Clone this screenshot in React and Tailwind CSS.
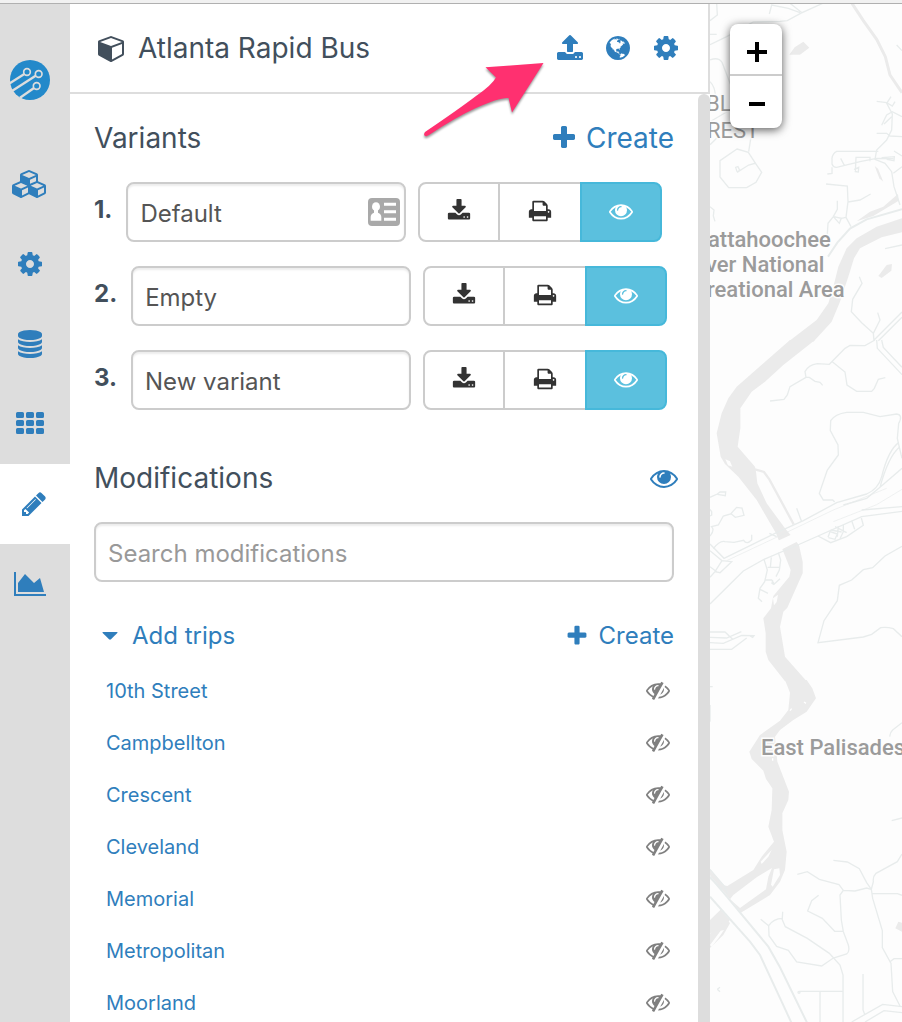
import React from "react";

const ICONS = {
  upload: {
    w: 1792,
    d: "M1344 1472q0-26-19-45t-45-19-45 19-19 45 19 45 45 19 45-19 19-45zm256 0q0-26-19-45t-45-19-45 19-19 45 19 45 45 19 45-19 19-45zm128-224v320q0 40-28 68t-68 28h-1472q-40 0-68-28t-28-68v-320q0-40 28-68t68-28h427q21 56 70.5 92t110.5 36h256q61 0 110.5-36t70.5-92h427q40 0 68 28t28 68zm-325-648q-17 40-59 40h-256v448q0 26-19 45t-45 19h-256q-26 0-45-19t-19-45v-448h-256q-42 0-59-40-17-39 14-69l448-448q18-19 45-19t45 19l448 448q31 30 14 69z",
  },
  download: {
    w: 1792,
    d: "M1344 1344q0-26-19-45t-45-19-45 19-19 45 19 45 45 19 45-19 19-45zm256 0q0-26-19-45t-45-19-45 19-19 45 19 45 45 19 45-19 19-45zm128-224v320q0 40-28 68t-68 28h-1472q-40 0-68-28t-28-68v-320q0-40 28-68t68-28h465l135 136q58 56 136 56t136-56l136-136h464q40 0 68 28t28 68zm-325-569q17 41-14 70l-448 448q-18 19-45 19t-45-19l-448-448q-31-29-14-70 17-39 59-39h256v-448q0-26 19-45t45-19h256q26 0 45 19t19 45v448h256q42 0 59 39z",
  },
  cog: {
    w: 1792,
    d: "M1152 896q0-106-75-181t-181-75-181 75-75 181 75 181 181 75 181-75 75-181zm512-109v222q0 12-8 23t-20 13l-185 28q-19 54-39 91 35 50 107 138 10 12 10 25t-9 23q-27 37-99 108t-94 71q-12 0-26-9l-138-108q-44 23-91 38-16 136-29 186-7 28-36 28h-222q-14 0-24.5-8.5t-11.5-21.5l-28-184q-49-16-90-37l-141 107q-10 9-25 9-14 0-25-11-126-114-165-168-7-10-7-23 0-12 8-23 15-21 51-66.5t54-70.5q-27-50-41-99l-183-27q-13-2-21-12.5t-8-23.5v-222q0-12 8-23t19-13l186-28q14-46 39-92-40-57-107-138-10-12-10-24 0-10 9-23 26-36 98.5-107.5t94.5-71.5q13 0 26 10l138 107q44-23 91-38 16-136 29-186 7-28 36-28h222q14 0 24.5 8.5t11.5 21.5l28 184q49 16 90 37l142-107q9-9 24-9 13 0 25 10 129 119 165 170 7 8 7 22 0 12-8 23-15 21-51 66.5t-54 70.5q26 50 41 98l183 28q13 2 21 12.5t8 23.5z",
  },
  database: {
    w: 1792,
    d: "M896 768q237 0 443-43t325-127v170q0 69-103 128t-280 93.5-385 34.5-385-34.5-280-93.5-103-128v-170q119 84 325 127t443 43zm0 768q237 0 443-43t325-127v170q0 69-103 128t-280 93.5-385 34.5-385-34.5-280-93.5-103-128v-170q119 84 325 127t443 43zm0-384q237 0 443-43t325-127v170q0 69-103 128t-280 93.5-385 34.5-385-34.5-280-93.5-103-128v-170q119 84 325 127t443 43zm0-1152q208 0 385 34.5t280 93.5 103 128v128q0 69-103 128t-280 93.5-385 34.5-385-34.5-280-93.5-103-128v-128q0-69 103-128t280-93.5 385-34.5z",
  },
  th: {
    w: 1792,
    d: "M96 128h320q96 0 96 96v192q0 96-96 96h-320q-96 0-96-96v-192q0-96 96-96zm640 0h320q96 0 96 96v192q0 96-96 96h-320q-96 0-96-96v-192q0-96 96-96zm640 0h320q96 0 96 96v192q0 96-96 96h-320q-96 0-96-96v-192q0-96 96-96zM96 640h320q96 0 96 96v192q0 96-96 96h-320q-96 0-96-96v-192q0-96 96-96zm640 0h320q96 0 96 96v192q0 96-96 96h-320q-96 0-96-96v-192q0-96 96-96zm640 0h320q96 0 96 96v192q0 96-96 96h-320q-96 0-96-96v-192q0-96 96-96zM96 1152h320q96 0 96 96v192q0 96-96 96h-320q-96 0-96-96v-192q0-96 96-96zm640 0h320q96 0 96 96v192q0 96-96 96h-320q-96 0-96-96v-192q0-96 96-96zm640 0h320q96 0 96 96v192q0 96-96 96h-320q-96 0-96-96v-192q0-96 96-96z",
  },
  pencil: {
    w: 1792,
    d: "M491 1536l91-91-235-235-91 91v107h128v128h107zm523-928q0-22-22-22-10 0-17 7l-542 542q-7 7-7 17 0 22 22 22 10 0 17-7l542-542q7-7 7-17zm-54-192l416 416-832 832h-416v-416zm683 96q0 53-37 90l-166 166-416-416 166-165q36-38 90-38 53 0 91 38l235 234q37 39 37 91z",
  },
  chart: {
    w: 2048,
    d: "M2048 1536v128h-2048v-1536h128v1408h1920zm-384-1024l256 896h-1664v-576l448-576 576 576z",
  },
  plus: {
    w: 1792,
    d: "M1600 736v192q0 40-28 68t-68 28h-416v416q0 40-28 68t-68 28h-192q-40 0-68-28t-28-68v-416h-416q-40 0-68-28t-28-68v-192q0-40 28-68t68-28h416v-416q0-40 28-68t68-28h192q40 0 68 28t28 68v416h416q40 0 68 28t28 68z",
  },
  eye: {
    w: 1792,
    d: "M1664 960q-152-236-381-353 61 104 61 225 0 185-131.5 316.5t-316.5 131.5-316.5-131.5-131.5-316.5q0-121 61-225-229 117-381 353 133 205 333.5 326.5t434.5 121.5 434.5-121.5 333.5-326.5zm-720-384q0-20-14-34t-34-14q-125 0-214.5 89.5t-89.5 214.5q0 20 14 34t34 14 34-14 14-34q0-86 61-147t147-61q20 0 34-14t14-34zm848 384q0 34-20 69-140 230-376.5 368.5t-499.5 138.5-499.5-139-376.5-368q-20-35-20-69t20-69q140-229 376.5-368t499.5-139 499.5 139 376.5 368q20 35 20 69z",
  },
  eyeSlash: {
    w: 1792,
    d: "M555 1335l78-141q-87-63-136-159t-49-203q0-121 61-225-229 117-381 353 167 258 427 375zm389-759q0-20-14-34t-34-14q-125 0-214.5 89.5t-89.5 214.5q0 20 14 34t34 14 34-14 14-34q0-86 61-147t147-61q20 0 34-14t14-34zm363-191q0 7-1 9-105 188-315 566t-316 567l-49 89q-10 16-28 16-12 0-134-70-16-10-16-28 0-12 44-87-143-65-263.5-173t-208.5-245q-20-31-20-69t20-69q153-235 380-371t496-136q89 0 180 17l54-97q10-16 28-16 5 0 18 6t31 15.5 33 18.5 31.5 18.5 19.5 11.5q16 10 16 27zm37 447q0 139-79 253.5t-209 164.5l280-502q8 45 8 84zm448 128q0 35-20 69-39 64-109 145-150 172-347.5 267t-419.5 95l74-132q212-18 392.5-137t301.5-307q-115-179-282-294l63-112q95 64 182.5 153t144.5 184q20 34 20 69z",
  },
  print: {
    w: 1792,
    d: "M448 1536h896v-256h-896v256zm0-640h896v-384h-160q-40 0-68-28t-28-68v-160h-640v640zm1152 64q0-26-19-45t-45-19-45 19-19 45 19 45 45 19 45-19 19-45zm128 0v416q0 13-9.5 22.5t-22.5 9.5h-224v160q0 40-28 68t-68 28h-960q-40 0-68-28t-28-68v-160h-224q-13 0-22.5-9.5t-9.5-22.5v-416q0-79 56.5-135.5t135.5-56.5h64v-544q0-40 28-68t68-28h672q40 0 88 20t76 48l152 152q28 28 48 76t20 88v256h64q79 0 135.5 56.5t56.5 135.5z",
  },
  cube: {
    w: 1792,
    d: "M896 1629l640-349v-636l-640 233v752zm-64-865l698-254-698-254-698 254zm832-252v768q0 35-18 65t-49 47l-704 384q-28 16-61 16t-61-16l-704-384q-31-17-49-47t-18-65v-768q0-40 23-73t61-47l704-256q22-8 44-8t44 8l704 256q38 14 61 47t23 73z",
  },
  cubes: {
    w: 2304,
    d: "M640 1632l384-192v-314l-384 164v342zm-64-454l404-173-404-173-404 173zm1088 454l384-192v-314l-384 164v342zm-64-454l404-173-404-173-404 173zm-448-293l384-165v-266l-384 164v267zm-64-379l441-189-441-189-441 189zm1088 518v416q0 36-19 67t-52 47l-448 224q-25 14-57 14t-57-14l-448-224q-4-2-7-4-2 2-7 4l-448 224q-25 14-57 14t-57-14l-448-224q-33-16-52-47t-19-67v-416q0-38 21.5-70t56.5-48l434-186v-400q0-38 21.5-70t56.5-48l448-192q23-10 50-10t50 10l448 192q35 16 56.5 48t21.5 70v400l434 186q36 16 57 48t21 70z",
  },
  globe: {
    w: 1792,
    d: "M896 128q209 0 385.5 103t279.5 279.5 103 385.5-103 385.5-279.5 279.5-385.5 103-385.5-103-279.5-279.5-103-385.5 103-385.5 279.5-279.5 385.5-103zm274 521q-2 1-9.5 9.5t-13.5 9.5q2 0 4.5-5t5-11 3.5-7q6-7 22-15 14-6 52-12 34-8 51 11-2-2 9.5-13t14.5-12q3-2 15-4.5t15-7.5l2-22q-12 1-17.5-7t-6.5-21q0 2-6 8 0-7-4.5-8t-11.5 1-9 1q-10-3-15-7.5t-8-16.5-4-15q-2-5-9.5-11t-9.5-10q-1-2-2.5-5.5t-3-6.5-4-5.5-5.5-2.5-7 5-7.5 10-4.5 5q-3-2-6-1.5t-4.5 1-4.5 3-5 3.5q-3 2-8.5 3t-8.5 2q15-5-1-11-10-4-16-3 9-4 7.5-12t-8.5-14h5q-1-4-8.5-8.5t-17.5-8.5-13-6q-8-5-34-9.5t-33-.5q-5 6-4.5 10.5t4 14 3.5 12.5q1 6-5.5 13t-6.5 12q0 7 14 15.5t10 21.5q-3 8-16 16t-16 12q-5 8-1.5 18.5t10.5 16.5q2 2 1.5 4t-3.5 4.5-5.5 4-6.5 3.5l-3 2q-11 5-20.5-6t-13.5-26q-7-25-16-30-23-8-29 1-5-13-41-26-25-9-58-4 6-1 0-15-7-15-19-12 3-6 4-17.5t1-13.5q3-13 12-23 1-1 7-8.5t9.5-13.5.5-6q35 4 50-11 5-5 11.5-17t10.5-17q9-6 14-5.5t14.5 5.5 14.5 5q14 1 15.5-11t-7.5-20q12 1 3-17-4-7-8-9-12-4-27 5-8 4 2 8-1-1-9.5 10.5t-16.5 17.5-16-5q-1-1-5.5-13.5t-9.5-13.5q-8 0-16 15 3-8-11-15t-24-8q19-12-8-27-7-4-20.5-5t-19.5 4q-5 7-5.5 11.5t5 8 10.5 5.5 11.5 4 8.5 3q14 10 8 14-2 1-8.5 3.5t-11.5 4.5-6 4q-3 4 0 14t-2 14q-5-5-9-17.5t-7-16.5q7 9-25 6l-10-1q-4 0-16 2t-20.5 1-13.5-8q-4-8 0-20 1-4 4-2-4-3-11-9.5t-10-8.5q-46 15-94 41 6 1 12-1 5-2 13-6.5t10-5.5q34-14 42-7l5-5q14 16 20 25-7-4-30-1-20 6-22 12 7 12 5 18-4-3-11.5-10t-14.5-11-15-5q-16 0-22 1-146 80-235 222 7 7 12 8 4 1 5 9t2.5 11 11.5-3q9 8 3 19 1-1 44 27 19 17 21 21 3 11-10 18-1-2-9-9t-9-4q-3 5 .5 18.5t10.5 12.5q-7 0-9.5 16t-2.5 35.5-1 23.5l2 1q-3 12 5.5 34.5t21.5 19.5q-13 3 20 43 6 8 8 9 3 2 12 7.5t15 10 10 10.5q4 5 10 22.5t14 23.5q-2 6 9.5 20t10.5 23q-1 0-2.5 1t-2.5 1q3 7 15.5 14t15.5 13q1 3 2 10t3 11 8 2q2-20-24-62-15-25-17-29-3-5-5.5-15.5t-4.5-14.5q2 0 6 1.5t8.5 3.5 7.5 4 2 3q-3 7 2 17.5t12 18.5 17 19 12 13q6 6 14 19.5t0 13.5q9 0 20 10.5t17 19.5q5 8 8 26t5 24q2 7 8.5 13.5t12.5 9.5l16 8 13 7q5 2 18.5 10.5t21.5 11.5q10 4 16 4t14.5-2.5 13.5-3.5q15-2 29 15t21 21q36 19 55 11-2 1 .5 7.5t8 15.5 9 14.5 5.5 8.5q5 6 18 15t18 15q6-4 7-9-3 8 7 20t18 10q14-3 14-32-31 15-49-18 0-1-2.5-5.5t-4-8.5-2.5-8.5 0-7.5 5-3q9 0 10-3.5t-2-12.5-4-13q-1-8-11-20t-12-15q-5 9-16 8t-16-9q0 1-1.5 5.5t-1.5 6.5q-13 0-15-1 1-3 2.5-17.5t3.5-22.5q1-4 5.5-12t7.5-14.5 4-12.5-4.5-9.5-17.5-2.5q-19 1-26 20-1 3-3 10.5t-5 11.5-9 7q-7 3-24 2t-24-5q-13-8-22.5-29t-9.5-37q0-10 2.5-26.5t3-25-5.5-24.5q3-2 9-9.5t10-10.5q2-1 4.5-1.5t4.5 0 4-1.5 3-6q-1-1-4-3-3-3-4-3 7 3 28.5-1.5t27.5 1.5q15 11 22-2 0-1-2.5-9.5t-.5-13.5q5 27 29 9 3 3 15.5 5t17.5 5q3 2 7 5.5t5.5 4.5 5-.5 8.5-6.5q10 14 12 24 11 40 19 44 7 3 11 2t4.5-9.5 0-14-1.5-12.5l-1-8v-18l-1-8q-15-3-18.5-12t1.5-18.5 15-18.5q1-1 8-3.5t15.5-6.5 12.5-8q21-19 15-35 7 0 11-9-1 0-5-3t-7.5-5-4.5-2q9-5 2-16 5-3 7.5-11t7.5-10q9 12 21 2 7-8 1-16 5-7 20.5-10.5t18.5-9.5q7 2 8-2t1-12 3-12q4-5 15-9t13-5l17-11q3-4 0-4 18 2 31-11 10-11-6-20 3-6-3-9.5t-15-5.5q3-1 11.5-.5t10.5-1.5q15-10-7-16-17-5-43 12zm-163 877q206-36 351-189-3-3-12.5-4.5t-12.5-3.5q-18-7-24-8 1-7-2.5-13t-8-9-12.5-8-11-7q-2-2-7-6t-7-5.5-7.5-4.5-8.5-2-10 1l-3 1q-3 1-5.5 2.5t-5.5 3-4 3 0 2.5q-21-17-36-22-5-1-11-5.5t-10.5-7-10-1.5-11.5 7q-5 5-6 15t-2 13q-7-5 0-17.5t2-18.5q-3-6-10.5-4.5t-12 4.5-11.5 8.5-9 6.5-8.5 5.5-8.5 7.5q-3 4-6 12t-5 11q-2-4-11.5-6.5t-9.5-5.5q2 10 4 35t5 38q7 31-12 48-27 25-29 40-4 22 12 26 0 7-8 20.5t-7 21.5q0 6 2 16z",
  },
};

function Icon({ name, className = "h-7" }) {
  const icon = ICONS[name];
  return (
    <svg viewBox={`0 0 ${icon.w} 1792`} fill="currentColor" aria-hidden="true" className={`block shrink-0 ${className}`}>
      <path d={icon.d} />
    </svg>
  );
}

function Logo() {
  return (
    <svg viewBox="0 0 120 120" className="block size-10" aria-hidden="true">
      <circle cx="60" cy="60" r="60" fill="#2389ca" />
      <g fill="none" stroke="#ddd" strokeWidth="7">
        <path d="M-2 71L43 42" />
        <path d="M6 93L77 47" />
        <path d="M30 113L72 84" />
        <g strokeWidth="5">
          <circle cx="51" cy="36" r="10" />
          <circle cx="86" cy="42" r="10" />
          <circle cx="80" cy="78" r="10" />
        </g>
      </g>
    </svg>
  );
}

const NAV = [
  { icon: "cubes", label: "Projects" },
  { icon: "cog", label: "Region settings" },
  { icon: "database", label: "GTFS bundles" },
  { icon: "th", label: "Opportunity datasets" },
  { icon: "pencil", label: "Edit modifications", active: true },
  { icon: "chart", label: "Analyze" },
];

function Sidebar() {
  return (
    <nav className="flex w-[70px] shrink-0 flex-col bg-[#ddd] pt-14 text-[#2f7ebc]">
      <a href="#home" aria-label="Home" className="mb-11 ml-[10px] self-start">
        <Logo />
      </a>
      {NAV.map((item) => (
        <a
          key={item.icon}
          href={`#${item.icon}`}
          aria-label={item.label}
          className={
            item.active
              ? "flex h-20 items-center justify-center bg-white pr-[2px]"
              : "flex h-20 items-center justify-center pr-[10px]"
          }
        >
          <Icon name={item.icon} />
        </a>
      ))}
    </nav>
  );
}

function Header() {
  return (
    <header className="flex h-[90px] shrink-0 items-center justify-between border-r-2 border-b-2 border-[#ddd] pr-7 pl-7">
      <h1 className="flex items-center gap-3 text-[28px] leading-8 text-[#424f5c]">
        <Icon name="cube" />
        Atlanta Rapid Bus
      </h1>
      <div className="flex gap-5 text-[#2f7ebc]">
        <button aria-label="Upload"><Icon name="upload" /></button>
        <button aria-label="Open map"><Icon name="globe" /></button>
        <button aria-label="Settings"><Icon name="cog" /></button>
      </div>
    </header>
  );
}

function ContactCard() {
  return (
    <svg viewBox="0 0 96 84" className="absolute top-4 right-[6px] h-7 w-8" aria-hidden="true">
      <rect width="96" height="84" rx="12" fill="#a9a9a9" />
      <g fill="#fff">
        <ellipse cx="24" cy="26" rx="12" ry="13" />
        <path d="M18 34h12v10q10 3 10 14v10H8V58q0-11 10-14z" />
        <path d="M48 14h36v9H48zM48 37h36v9H48zM48 59h36v9H48z" />
      </g>
    </svg>
  );
}

function Variant({ index, name, card }) {
  return (
    <li className="flex">
      <label htmlFor={`variant-${index}`} className="mr-[14px] pt-3 text-2xl leading-8 font-bold text-[#424f5c]">
        {index}.
      </label>
      <div className="relative mr-3 w-[280px]">
        <input
          id={`variant-${index}`}
          type="text"
          defaultValue={name}
          className="h-[60px] w-full rounded-lg border-2 border-[#ccc] bg-white px-3 pt-[2px] text-2xl text-[#555] shadow-[inset_0_2px_2px_rgba(0,0,0,0.075)]"
        />
        {card && <ContactCard />}
      </div>
      <div className="flex h-[60px] text-[#333]">
        <button aria-label="Download" className="flex w-[82px] items-center justify-center rounded-l-lg border-2 border-[#ccc] pb-[2px]">
          <Icon name="download" className="h-6" />
        </button>
        <button aria-label="Print" className="flex w-20 items-center justify-center border-y-2 border-[#ccc] pb-[2px]">
          <Icon name="print" className="h-6" />
        </button>
        <button aria-label="Show variant" className="flex w-[82px] items-center justify-center rounded-r-lg border-2 border-[#46b8da] bg-[#5bc0de] pb-[2px] text-white">
          <Icon name="eye" className="h-6" />
        </button>
      </div>
    </li>
  );
}

const TRIPS = ["10th Street", "Campbellton", "Crescent", "Cleveland", "Memorial", "Metropolitan", "Moorland"];

function Panel() {
  return (
    <main className="flex w-[640px] shrink-0 flex-col bg-white">
      <Header />
      <div className="flex min-h-0 flex-1">
        <div className="min-w-0 flex-1 overflow-hidden px-6 pt-7">
          <div className="flex items-center justify-between text-[28px] leading-8">
            <h2 className="text-[#424f5c]">Variants</h2>
            <button className="flex items-center gap-2 text-[#2f7ebc]">
              <Icon name="plus" />
              Create
            </button>
          </div>
          <ol className="mt-7 flex flex-col gap-6">
            <Variant index={1} name="Default" card />
            <Variant index={2} name="Empty" />
            <Variant index={3} name="New variant" />
          </ol>

          <div className="mt-[52px] flex items-center justify-between">
            <h2 className="text-[28px] leading-8 text-[#424f5c]">Modifications</h2>
            <button aria-label="Show all modifications" className="-mr-1 text-[#2f7ebc]">
              <Icon name="eye" />
            </button>
          </div>
          <input
            type="search"
            aria-label="Search modifications"
            placeholder="Search modifications"
            className="mt-7 block h-[60px] w-full rounded-lg border-2 border-[#ccc] px-3 pt-[2px] text-2xl text-[#555] shadow-[inset_0_2px_2px_rgba(0,0,0,0.075)] placeholder:text-[#999]"
          />

          <div className="mt-[38px] flex items-center justify-between text-2xl text-[#2f7ebc]">
            <button className="flex items-center gap-[14px] pl-2">
              <svg viewBox="0 0 16 8" className="block h-2 w-4" fill="currentColor" aria-hidden="true">
                <path d="M1 0h14q1 0 .3 1L9 7.300q-1 .8-2 0L.7 1Q0 0 1 0z" />
              </svg>
              Add trips
            </button>
            <button className="flex items-center gap-[10px]">
              <Icon name="plus" className="h-6" />
              Create
            </button>
          </div>
          <ul className="mt-[13px]">
            {TRIPS.map((trip) => (
              <li key={trip} className="flex h-[52px] items-center justify-between pr-1 pl-3 text-xl">
                <a href={`#${trip}`} className="text-[#2f7ebc]">{trip}</a>
                <button aria-label={`Show ${trip}`} className="pb-[2px] text-[#808080]">
                  <Icon name="eyeSlash" className="h-6" />
                </button>
              </li>
            ))}
          </ul>
        </div>
        <div className="w-3 shrink-0 rounded-t-md bg-[#ddd]" />
      </div>
    </main>
  );
}

function MapDrawing() {
  return (
    <svg viewBox="0 0 192 1018" preserveAspectRatio="xMinYMin slice" className="absolute inset-0 h-full w-full" aria-hidden="true">
      <g transform="translate(-10 -4) scale(0.33333)" fill="none" stroke="#e8ecec" strokeWidth="4">
        <path d="M606 655L530 680 470 715 440 745 415 800 400 860 385 910 350 960 265 1025H340L395 965 420 905 445 830 462 775 480 745 545 712 606 697z" fill="#ebebeb" stroke="none" />
        <path d="M456 10L490 62 530 118 556 170 570 225 606 278" stroke="#ebebeb" strokeWidth="9" />
        <path d="M268 164L284 142 310 125 328 143 300 164z" fill="#ebebeb" stroke="none" />
        <path d="M535 828L560 795 576 792 574 812 545 834z" fill="#ebebeb" stroke="none" />
        <path d="M470 664L510 635 550 620 594 582 596 602 520 648z" fill="#ebebeb" stroke="none" />
        <path d="M524 498L534 506 550 545 538 535z" fill="#ebebeb" stroke="none" />
        <path d="M208 42L215 15 265 25 300 38M270 10L306 38 368 10M306 38L262 62 240 64 160 66 80 110 30 134M30 103H50M50 10L52 45 30 62" />
        <path d="M30 180Q55 170 66 187L98 270M30 245Q48 262 46 300M30 365L90 330M30 434L60 405M155 398L146 455" />
        <path d="M111 447L145 457 165 488 185 517 168 547 140 563H86L60 531V482zM111 515L107 502 114 500 119 511 111 517 146 495 168 489" />
        <path d="M30 620L42 630 40 648 45 664" />
        <path d="M573 290L560 310 577 342 575 390 560 420 530 450 525 478 555 490 575 515 582 560 600 615M530 304L560 308 577 318 585 305M545 376L560 345 577 335 606 350M530 400H560L570 408 606 410M575 350L552 372M590 135L606 152" />
        <path d="M535 454H410Q398 460 396 475V492Q400 503 410 502L480 485 530 475 580 476M470 515L464 508 476 502 475 516 466 515 468 472H510V484M422 475L434 498M396 502V520L382 522M580 520L606 500M545 473L583 470 582 482 560 478M582 453L606 468" />
        <path d="M378 552L442 558 444 605 438 652 453 680M444 606L480 600 512 582M412 602V628L400 650 384 670 382 702M400 650L418 670 424 655 401 650M438 652L424 655" />
        <path d="M384 770L412 728 450 686 500 658 606 628" strokeWidth="6" />
        <path d="M478 830L486 850 458 898 454 935 485 968 520 1000 522 1022M533 938L540 960 520 1000M520 1022L606 936M535 1022L606 952M555 746L606 735" />
      </g>
      <g transform="translate(-10 336) scale(0.33333)" fill="none" stroke="#e8ecec" strokeWidth="4">
        <path d="M270 0L110 140 85 175 65 220 50 280 62 350 75 372 115 410 170 480 228 580 250 635 272 690 268 710 220 768 213 805 190 835 197 880 197 935 205 960 255 1024H320L255 950 240 860 250 815 262 803 308 700 308 665 297 615 255 565 200 490 172 430 168 395 165 380 113 320 121 265 121 205 155 155 195 125 250 75 345 0z" fill="#ebebeb" stroke="none" />
        <path d="M165 388L192 396 208 418 281 553" stroke="#ebebeb" strokeWidth="7" />
        <path d="M76 358L90 364 97 380 84 376zM219 775L234 764 230 786 222 796z" fill="#fdfdfd" stroke="none" />
        <path d="M30 735L140 645 300 572 460 500 560 440 606 395V450L520 492 380 560 190 656 130 690 30 790z" fill="#fdfdfd" stroke="none" />
        <path d="M30 612L72 655 225 580 310 542 410 488 500 462Q535 447 545 410 565 330 596 308M30 632L66 662 45 695 30 712M66 662L95 665 60 698 45 695M430 495L500 475 540 442 606 385M30 792L130 693 192 658 300 612 485 530 606 514M485 510L606 500M540 442Q565 350 598 322L606 355" />
        <path d="M80 662L225 594 400 510 560 445M400 545L530 494 606 448" strokeWidth="2" />
        <path d="M30 680L50 695M290 505L305 545M208 580L230 590" />
        <path d="M210 183L252 178 262 165 270 140 318 112 315 95Q325 75 352 71L388 73 435 25 450 16 495 17 525 0M318 112H328L345 124 360 127 368 136M395 64L435 96 441 135 470 154H515L523 145 535 118 556 113" />
        <path d="M530 0L532 25 606 104M545 0L550 22 606 82" />
        <path d="M404 486L398 480H370L358 460 382 390 415 345 414 315 391 272 392 242Q405 222 440 217H490L540 230 590 222Q610 225 596 250L592 295 598 322" />
        <path d="M30 472L52 462 60 456H77L76 467 52 463M30 508L35 515V525L30 528M30 588Q45 570 35 560L55 555 70 528 92 522 110 502 126 504 132 526 106 532 94 522M40 626Q60 600 75 605L102 607 131 601Q140 615 155 600V584" />
        <path d="M192 658L202 690 194 725 180 745 175 775 186 785M214 652L211 682H238M203 682H211M235 638L242 660 238 690 228 710M196 720H215L223 732 240 716M180 748L204 760M218 720L216 730 223 734" />
        <path d="M354 588L392 608 440 590 490 556 484 534M384 592L390 575 412 582 405 598 385 593M405 560L440 578M430 555V575L420 596M415 558L412 590M392 570L425 576M455 542L464 568" />
        <path d="M606 619L555 648 518 683 490 689 455 720 418 736 412 782 372 842 354 908 490 891 515 883 542 863Q560 860 580 866L606 890" />
        <path d="M30 876H75L98 898M30 892L80 894 124 875M30 908L70 910 125 886 162 887 158 892 150 888M30 928H95L140 894" />
      </g>
      <g transform="translate(-10 676) scale(0.33333)" fill="none" stroke="#e8ecec" strokeWidth="4">
        <path d="M255 0L270 38 265 90 240 122 180 165 148 215 155 237 190 272 198 297 217 325 215 390 205 440 222 485 185 530 160 570 82 618 72 616 30 567 30 586 92 660 30 720V762L120 700 210 645 240 605 255 570 260 515 247 450 247 400 265 360 267 335 232 245 225 170 240 150 280 120 320 95 348 55 337 25 320 0z" fill="#ebebeb" stroke="none" />
        <path d="M30 762L80 715 90 730 70 765 30 804z" fill="#ebebeb" stroke="none" />
        <path d="M216 564L205 590 198 628 120 684 90 658 100 645 170 592zM222 568L238 565 240 585 218 620 213 614zM182 545L215 510 205 530 185 552z" fill="#fdfdfd" stroke="none" />
        <path d="M30 795L62 752 72 750 55 775 35 800z" fill="#fdfdfd" stroke="none" />
        <path d="M30 590L85 652 205 800 240 862 325 1030H270L180 825 150 785 30 655z" fill="#fdfdfd" stroke="none" />
        <path d="M30 590L85 655 205 800 240 862 322 1030M30 650L150 785 180 825 245 965 275 1030" strokeWidth="6" />
        <path d="M30 568L74 620 82 640M30 594L66 628M30 75V125M30 20H38M52 928L60 922M52 928L60 935" />
        <path d="M270 92L275 86M312 66L318 70M218 235V242" stroke="#fff" />
        <path d="M606 128L578 150Q568 160 570 170M575 422L606 414M400 541L442 546 478 566 500 608 514 628M606 522L592 545 528 580Q518 590 520 605L514 628 518 655 547 752V803L573 850 578 935 600 978M515 641H592L606 646M570 845L582 836H606" />
        <path d="M292 583L322 575 358 598 417 614 430 631 465 633 500 624 514 628M430 631L420 645 424 720 430 755 445 795Q450 815 440 822L400 834 365 858 290 846 265 811 230 799 207 767 206 737Q220 716 247 715L248 695M206 737L182 718M245 715L256 740 322 775 388 820 420 855 429 885V1026M356 646L335 662 323 693 367 715 404 754H430" />
        <path d="M298 934H429M360 934V1026M489 882V990L494 1003M455 1026L548 973 606 980M495 1026L552 992 606 998" />
        <path d="M586 745L595 725 606 728V755z" fill="#ebebeb" stroke="none" />
        <circle cx="297" cy="937" r="3" />
      </g>
      <g fill="#9b9b9b" stroke="#fdfdfd" strokeWidth="3" paintOrder="stroke" fontFamily="Roboto, sans-serif">
        <g fontSize="22">
          <text x="-4" y="107">BL</text>
          <text x="-3" y="134">REST</text>
        </g>
        <g fontSize="22" fontWeight="500">
          <text x="-2" y="243">attahoochee</text>
          <text x="-4" y="268">ver National</text>
          <text x="-3" y="293">reational Area</text>
          <text x="51" y="751">East Palisades</text>
        </g>
      </g>
    </svg>
  );
}

function MapView() {
  return (
    <section aria-label="Map" className="relative min-w-0 flex-1 overflow-hidden bg-[#fdfdfd]">
      <MapDrawing />
      <div className="absolute top-5 left-5 flex w-[52px] flex-col overflow-hidden rounded-lg bg-white shadow-[0_2px_10px_rgba(0,0,0,0.65)]">
        <button aria-label="Zoom in" className="flex h-[52px] items-center justify-center border-b-2 border-[#ccc] pt-[6px] pl-[2px]">
          <svg viewBox="0 0 20 20" className="size-5" aria-hidden="true">
            <path d="M8 0h4v8h8v4h-8v8H8v-8H0V8h8z" />
          </svg>
        </button>
        <button aria-label="Zoom out" className="flex h-[52px] items-center justify-center pt-[4px] pl-[2px]">
          <svg viewBox="0 0 16 4" className="h-1 w-4" aria-hidden="true">
            <path d="M0 0h16v4H0z" />
          </svg>
        </button>
      </div>
    </section>
  );
}

function ArrowMark() {
  return (
    <svg
      viewBox="0 0 124 80"
      className="pointer-events-none absolute top-[60px] left-[422px] h-20 w-[124px] drop-shadow-[0_2px_1px_rgba(0,0,0,0.4)]"
      aria-hidden="true"
    >
      <path
        d="M121.5 3L63.5 7.300 74 17.500Q70 25 54 36 37 49 3 72 1.500 74 2.500 75.500 4 77 7 75 34 57 54 48 78 37 86.500 38L90 52.500z"
        fill="#ff3070"
      />
    </svg>
  );
}

export default function App() {
  return (
    <div className="relative flex h-screen flex-col overflow-hidden bg-white font-['Inter',sans-serif]">
      <div className="h-1 shrink-0 border-b border-[#b0b0b0] bg-[#f1f1f1]" />
      <div className="flex min-h-0 flex-1">
        <Sidebar />
        <Panel />
        <MapView />
      </div>
      <ArrowMark />
    </div>
  );
}
